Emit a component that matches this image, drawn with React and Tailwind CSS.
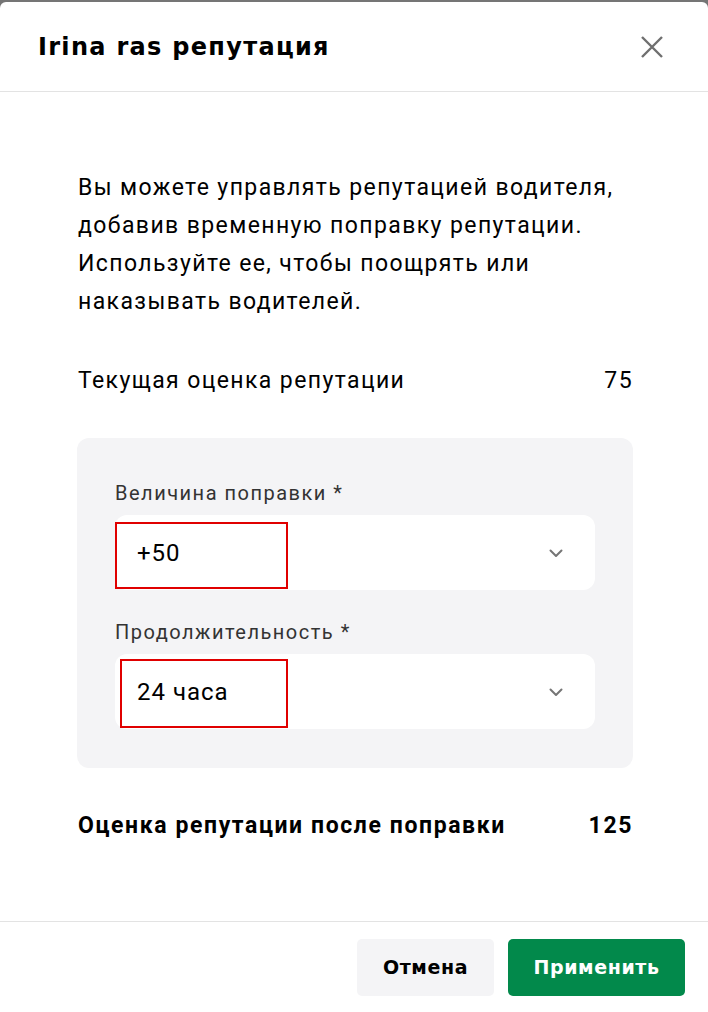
import { useState } from "react";

const sans = { fontFamily: "Roboto, 'Noto Sans', sans-serif" };
const head = { fontFamily: "'DejaVu Sans', Inter, sans-serif" };

function Chevron() {
  return (
    <svg width="18" height="18" viewBox="0 0 18 18" fill="none" className="shrink-0">
      <path d="M3.5 6.5 9 12l5.5-5.5" stroke="#757575" strokeWidth="2" strokeLinecap="round" strokeLinejoin="round" />
    </svg>
  );
}

function SelectField({ label, value, mark }) {
  return (
    <div className="flex flex-col">
      <label className="text-[20px] leading-[24px] tracking-[1.5px] text-[#333]" style={sans}>
        {label} *
      </label>
      <div className="relative mt-[10px] flex h-[75px] items-center justify-between rounded-[12px] bg-white pl-[22px] pr-[30px]">
        <span className="text-[24px] tracking-[1px] text-black" style={sans}>{value}</span>
        <Chevron />
        {/* red annotation box from the screenshot */}
        <div className={`pointer-events-none absolute border-2 border-[#e00000] ${mark}`} />
      </div>
    </div>
  );
}

/**
 * Reputation adjustment modal.
 * @returns {JSX.Element}
 */
export default function App() {
  const [amount] = useState("+50");
  const [duration] = useState("24 часа");

  return (
    <div className="h-[1012px] overflow-hidden bg-[#757575] pt-[2px]">
      <div className="flex h-[1010px] flex-col rounded-t-[6px] bg-white">
        <header className="flex h-[90px] shrink-0 items-center justify-between border-b border-[#e3e3e3] pl-[38px] pr-[42px]">
          <h1 className="text-[24px] font-bold tracking-[1.3px] text-black" style={head}>
            Irina ras репутация
          </h1>
          <button type="button" className="flex h-[28px] w-[28px] items-center justify-center">
            <svg width="24" height="24" viewBox="0 0 24 24" fill="none">
              <path d="M2 2l20 20M22 2 2 22" stroke="#6f6f6f" strokeWidth="2.4" />
            </svg>
          </button>
        </header>

        <main className="flex-1 pl-[78px] pr-[60px] pt-[77px]" style={sans}>
          <p className="whitespace-nowrap text-[23px] leading-[38px] tracking-[1.4px] text-black">
            Вы можете управлять репутацией водителя,
            <br />
            добавив временную поправку репутации.
            <br />
            Используйте ее, чтобы поощрять или
            <br />
            наказывать водителей.
          </p>

          <div className="mr-[15px] mt-[41px] flex items-center justify-between text-[23px] leading-[38px] tracking-[1.4px] text-black">
            <span>Текущая оценка репутации</span>
            <span>75</span>
          </div>

          <div className="-ml-px mr-[15px] mt-[38px] flex flex-col gap-[30px] rounded-[12px] bg-[#f4f4f6] px-[38px] pb-[39px] pt-[43px]">
            <SelectField label="Величина поправки" value={amount} mark="left-0 top-[7px] h-[67px] w-[173px]" />
            <SelectField label="Продолжительность" value={duration} mark="left-[5px] top-[5px] h-[69px] w-[168px]" />
          </div>

          <div className="mr-[15px] mt-[39px] flex items-center justify-between text-[23px] font-bold leading-[38px] tracking-[1.6px] text-black">
            <span>Оценка репутации после поправки</span>
            <span>125</span>
          </div>
        </main>

        <footer className="flex h-[91px] shrink-0 items-start justify-end gap-[14px] border-t border-[#e3e3e3] pr-[23px] pt-[17px]">
          <button type="button" className="h-[57px] w-[137px] rounded-[5px] bg-[#f4f4f6] text-[19px] font-bold tracking-[0.6px] text-black" style={head}>
            Отмена
          </button>
          <button type="button" className="h-[57px] w-[177px] rounded-[5px] bg-[#02894b] text-[19px] font-bold tracking-[0.6px] text-white" style={head}>
            Применить
          </button>
        </footer>
      </div>
    </div>
  );
}
